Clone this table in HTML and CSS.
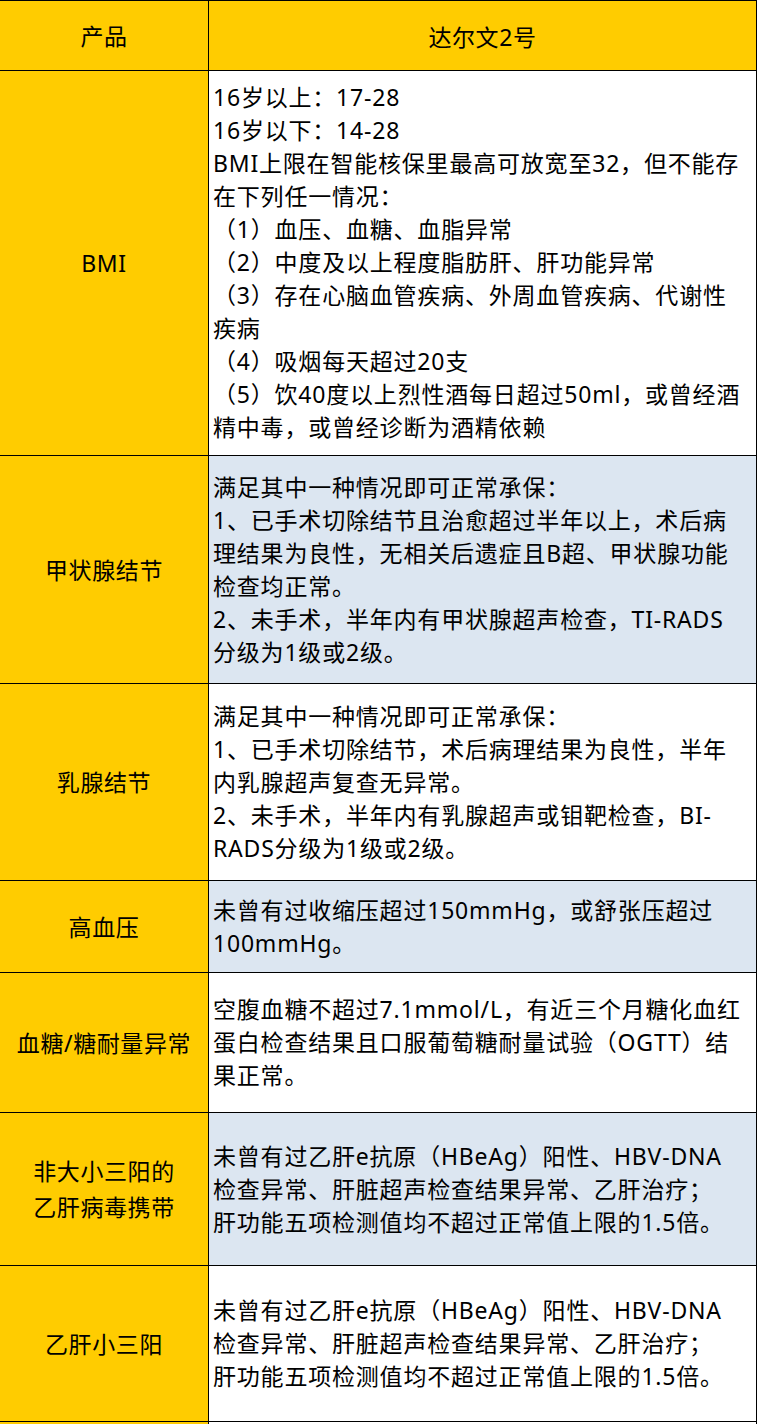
FILE: index.html
```html
<!DOCTYPE html>
<html lang="zh-CN">
<head>
<meta charset="utf-8">
<title>达尔文2号</title>
<link rel="stylesheet" href="styles.css">
</head>
<body>
<div class="table">
  <div class="cell key h-head">产品</div>
  <div class="cell head h-head">达尔文2号</div>

  <div class="cell key h-bmi">BMI</div>
  <div class="cell val h-bmi">16岁以上：17-28<br>16岁以下：14-28<br>BMI上限在智能核保里最高可放宽至32，但不能存<br>在下列任一情况：<br>（1）血压、血糖、血脂异常<br>（2）中度及以上程度脂肪肝、肝功能异常<br>（3）存在心脑血管疾病、外周血管疾病、代谢性<br>疾病<br>（4）吸烟每天超过20支<br>（5）饮40度以上烈性酒每日超过50ml，或曾经酒<br>精中毒，或曾经诊断为酒精依赖</div>

  <div class="cell key h-thy">甲状腺结节</div>
  <div class="cell val blue h-thy">满足其中一种情况即可正常承保：<br>1、已手术切除结节且治愈超过半年以上，术后病<br>理结果为良性，无相关后遗症且B超、甲状腺功能<br>检查均正常。<br>2、未手术，半年内有甲状腺超声检查，TI-RADS<br>分级为1级或2级。</div>

  <div class="cell key h-breast">乳腺结节</div>
  <div class="cell val h-breast">满足其中一种情况即可正常承保：<br>1、已手术切除结节，术后病理结果为良性，半年<br>内乳腺超声复查无异常。<br>2、未手术，半年内有乳腺超声或钼靶检查，BI-<br>RADS分级为1级或2级。</div>

  <div class="cell key h-bp">高血压</div>
  <div class="cell val blue h-bp">未曾有过收缩压超过150mmHg，或舒张压超过<br>100mmHg。</div>

  <div class="cell key h-glu">血糖/糖耐量异常</div>
  <div class="cell val h-glu">空腹血糖不超过7.1mmol/L，有近三个月糖化血红<br>蛋白检查结果且口服葡萄糖耐量试验（OGTT）结<br>果正常。</div>

  <div class="cell key h-hbv">非大小三阳的<br>乙肝病毒携带</div>
  <div class="cell val blue h-hbv">未曾有过乙肝e抗原（HBeAg）阳性、HBV-DNA<br>检查异常、肝脏超声检查结果异常、乙肝治疗；<br>肝功能五项检测值均不超过正常值上限的1.5倍。</div>

  <div class="cell key h-small">乙肝小三阳</div>
  <div class="cell val h-small">未曾有过乙肝e抗原（HBeAg）阳性、HBV-DNA<br>检查异常、肝脏超声检查结果异常、乙肝治疗；<br>肝功能五项检测值均不超过正常值上限的1.5倍。</div>

  <div class="cell key h-next"></div>
  <div class="cell val h-next"></div>
</div>
</body>
</html>
```

FILE: styles.css
```css
html, body {
  margin: 0;
  padding: 0;
  background: #ffffff;
}

body {
  font-family: "Noto Sans", "Noto Sans CJK SC", sans-serif;
  font-size: 23px;
  color: #000000;
  overflow: hidden;
}

.table {
  display: grid;
  grid-template-columns: 208px 547px;
  gap: 1px;
  width: fit-content;
  background: #000000;
  border-top: 1px solid #000000;
  border-right: 1px solid #000000;
}

.cell {
  display: flex;
  align-items: center;
  box-sizing: border-box;
}

.key {
  background: #ffcc00;
  justify-content: center;
  text-align: center;
  line-height: 36px;
  letter-spacing: 0.6px;
}

.head {
  background: #ffcc00;
  justify-content: center;
  letter-spacing: 0.6px;
}

.val {
  background: #ffffff;
  padding-left: 4px;
  line-height: 33px;
  white-space: nowrap;
  letter-spacing: 0.8px;
}

.val.blue {
  background: #dce6f1;
}

.h-head { height: 69px; }
.h-bmi { height: 384px; padding-bottom: 1px; }
.h-thy { height: 227px; }
.h-breast { height: 196px; }
.h-bp { height: 91px; }
.h-glu { height: 139px; }
.h-hbv { height: 152px; }
.h-small { height: 155px; }
.h-next { height: 60px; }
```
